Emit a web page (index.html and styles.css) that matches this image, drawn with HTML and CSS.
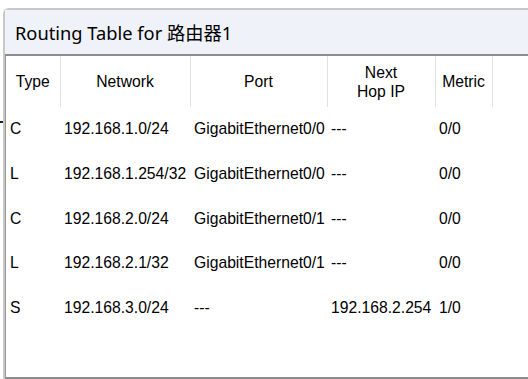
FILE: index.html
```html
<!DOCTYPE html>
<html lang="zh">
<head>
    <meta charset="UTF-8">
    <title>Routing Table for 路由器1</title>

    <link rel="stylesheet" href="styles.css">
</head>
<body>

<span class="edge-mark"></span>

<div class="window">
    <div class="title-bar">Routing Table for 路由器1</div>

    <div class="frame">
        <table class="routes">
            <colgroup>
                <col class="c-type">
                <col class="c-net">
                <col class="c-port">
                <col class="c-hop">
                <col class="c-metric">
                <col>
            </colgroup>
            <thead>
                <tr>
                    <th>Type</th>
                    <th>Network</th>
                    <th>Port</th>
                    <th>Next<br>Hop IP</th>
                    <th>Metric</th>
                    <th class="filler"></th>
                </tr>
            </thead>
            <tbody>
                <tr><td>C</td><td>192.168.1.0/24</td><td>GigabitEthernet0/0</td><td>---</td><td>0/0</td><td></td></tr>
                <tr><td>L</td><td>192.168.1.254/32</td><td>GigabitEthernet0/0</td><td>---</td><td>0/0</td><td></td></tr>
                <tr><td>C</td><td>192.168.2.0/24</td><td>GigabitEthernet0/1</td><td>---</td><td>0/0</td><td></td></tr>
                <tr><td>L</td><td>192.168.2.1/32</td><td>GigabitEthernet0/1</td><td>---</td><td>0/0</td><td></td></tr>
                <tr><td>S</td><td>192.168.3.0/24</td><td>---</td><td>192.168.2.254</td><td>1/0</td><td></td></tr>
            </tbody>
        </table>
    </div>
</div>

</body>
</html>
```

FILE: styles.css
```css
html, body {
    margin: 0;
    background-color: rgb(255, 255, 255);
    overflow: hidden;
}

body {
    font-family: "Liberation Sans", Arial, sans-serif;
    color: rgb(0, 0, 0);
}

/* little bit of the window behind */
.edge-mark {
    position: absolute;
    left: 0;
    top: 121px;
    width: 3px;
    height: 2px;
    background-color: rgb(30, 30, 30);
}

/* the dialog keeps going past the right side, so no right border */
.window {
    margin: 8px 0 0 3px;
    border: 2px solid rgb(200, 200, 200);
    border-right: none;
    border-bottom: none;
    border-radius: 6px 0 0 0;
}

.title-bar {
    height: 44px;
    padding-left: 10px;
    display: flex;
    align-items: center;
    background-color: rgb(239, 242, 248);
    font-family: "Noto Sans", "Noto Sans CJK SC", sans-serif;
    font-size: 18.3px;
    border-bottom: 2px solid rgb(140, 140, 140);
}

.frame {
    height: 321px;
    border-left: 1px solid rgb(150, 150, 150);
    border-bottom: 2px solid rgb(140, 140, 140);
}

.routes {
    border-collapse: collapse;
    table-layout: fixed;
    font-size: 15.7px;
}

.c-type   { width: 54px; }
.c-net    { width: 130px; }
.c-port   { width: 137px; }
.c-hop    { width: 108px; }
.c-metric { width: 57px; }

.routes th {
    height: 51px;
    padding: 0;
    font-weight: 400;
    text-align: center;
    vertical-align: middle;
    line-height: 19px;
    border-right: 1px solid rgb(225, 225, 225);
}

.routes th.filler {
    border-right: none;
    width: 30px;
}

.routes td {
    height: 44.7px;
    padding: 0 0 0 4px;
    white-space: nowrap;
    vertical-align: middle;
}
```
